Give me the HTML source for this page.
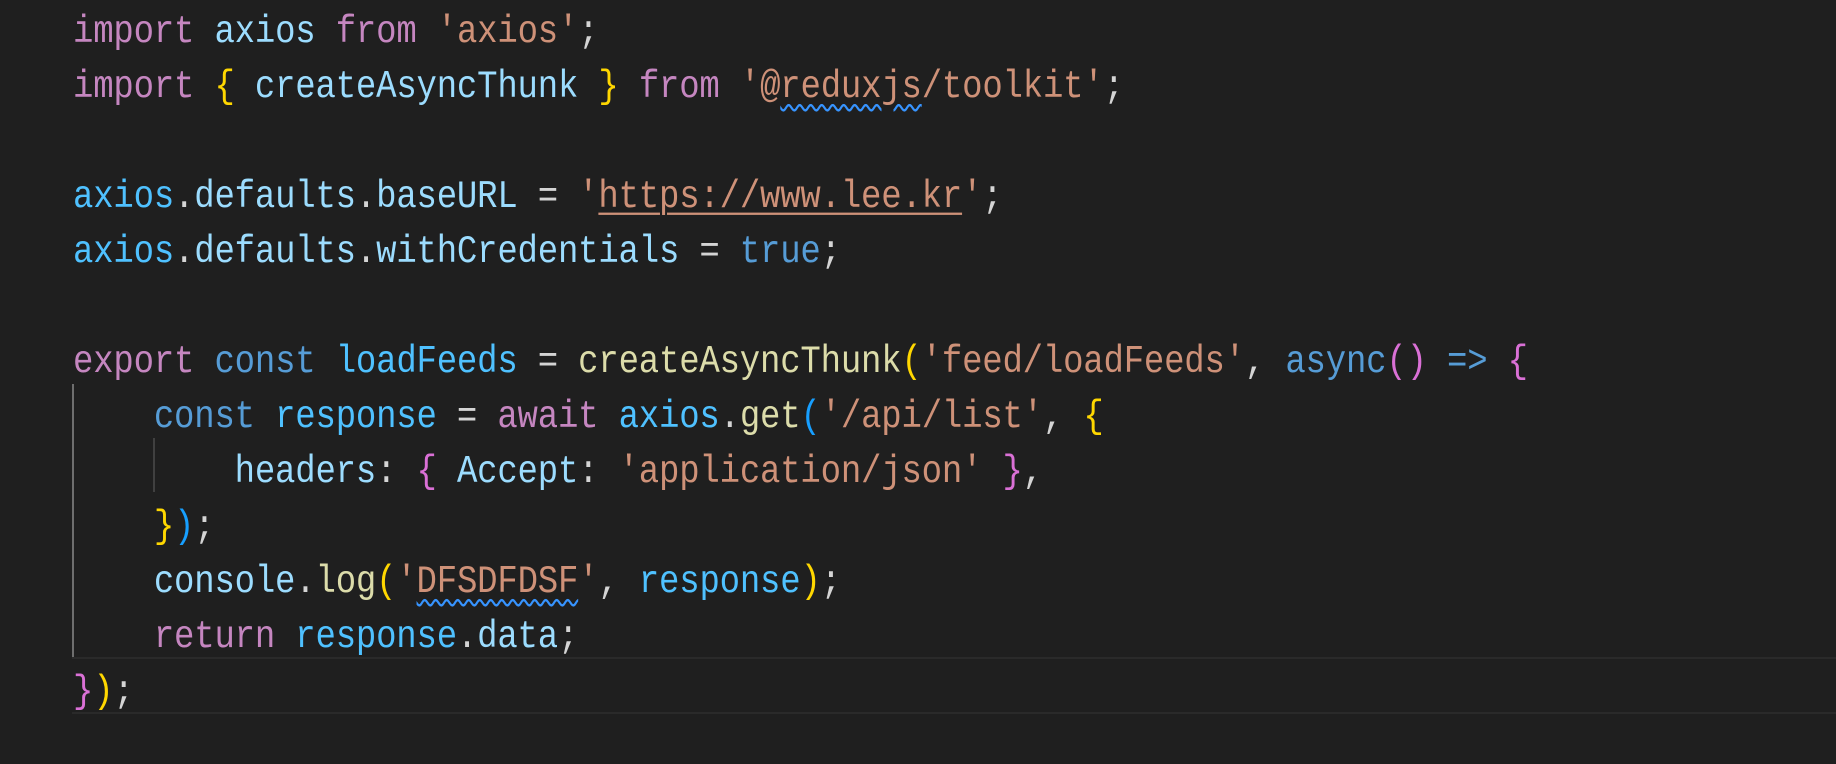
<!DOCTYPE html>
<html><head><meta charset="utf-8"><style>
html,body{margin:0;padding:0;background:#1f1f1f;width:1836px;height:764px;overflow:hidden}
.l{position:absolute;left:73px;height:55px;line-height:55px;font-family:"Liberation Mono",monospace;font-size:34px;white-space:pre;letter-spacing:-0.2px;transform:scaleY(1.15);transform-origin:0 36px;color:#d4d4d4}
.k{color:#c586c0}.v{color:#9cdcfe}.c{color:#4fc1ff}.s{color:#ce9178}.b{color:#569cd6}.f{color:#dcdcaa}
.y{color:#ffd700}.p{color:#da70d6}.bl{color:#179fff}
.sq{text-decoration:underline wavy #3794ff;text-decoration-thickness:2px;text-underline-offset:6px}
.u{text-decoration:underline;text-decoration-thickness:2px;text-underline-offset:5px}
.sq2{text-decoration:underline wavy #3794ff;text-decoration-thickness:2px;text-underline-offset:6px}
</style></head><body>
<div style="position:absolute;left:72px;top:657px;right:0;height:53px;border-top:2px solid #2a2a2a;border-bottom:2px solid #2a2a2a;border-left:0"></div>
<div style="position:absolute;left:72px;top:384px;width:2px;height:273px;background:#6e6e6e"></div>
<div style="position:absolute;left:153px;top:438px;width:2px;height:54px;background:#404040"></div>
<div class="l" style="top:7px"><span class="k">import</span> <span class="v">axios</span> <span class="k">from</span> <span class="s">'axios'</span>;</div>
<div class="l" style="top:62px"><span class="k">import</span> <span class="y">{</span> <span class="v">createAsyncThunk</span> <span class="y">}</span> <span class="k">from</span> <span class="s">'@<span class="sq">reduxjs</span>/toolkit'</span>;</div>
<div class="l" style="top:172px"><span class="c">axios</span>.<span class="v">defaults</span>.<span class="v">baseURL</span> = <span class="s">'<span class="u">https://www.lee.kr</span>'</span>;</div>
<div class="l" style="top:227px"><span class="c">axios</span>.<span class="v">defaults</span>.<span class="v">withCredentials</span> = <span class="b">true</span>;</div>
<div class="l" style="top:337px"><span class="k">export</span> <span class="b">const</span> <span class="c">loadFeeds</span> = <span class="f">createAsyncThunk</span><span class="y">(</span><span class="s">'feed/loadFeeds'</span>, <span class="b">async</span><span class="p">()</span> <span class="b">=&gt;</span> <span class="p">{</span></div>
<div class="l" style="top:392px">    <span class="b">const</span> <span class="c">response</span> = <span class="k">await</span> <span class="c">axios</span>.<span class="f">get</span><span class="bl">(</span><span class="s">'/api/list'</span>, <span class="y">{</span></div>
<div class="l" style="top:447px">        <span class="v">headers</span>: <span class="p">{</span> <span class="v">Accept</span>: <span class="s">'application/json'</span> <span class="p">}</span>,</div>
<div class="l" style="top:502px">    <span class="y">}</span><span class="bl">)</span>;</div>
<div class="l" style="top:557px">    <span class="v">console</span>.<span class="f">log</span><span class="y">(</span><span class="s">'<span class="sq2">DFSDFDSF</span>'</span>, <span class="c">response</span><span class="y">)</span>;</div>
<div class="l" style="top:612px">    <span class="k">return</span> <span class="c">response</span>.<span class="v">data</span>;</div>
<div class="l" style="top:667px"><span class="p">}</span><span class="y">)</span>;</div>
</body></html>
